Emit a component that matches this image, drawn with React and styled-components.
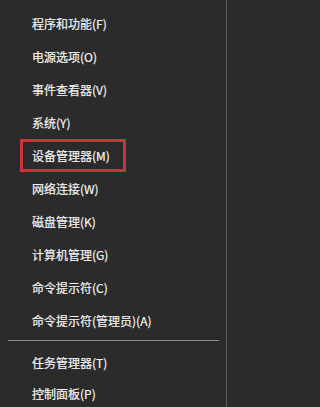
import React from "react";
import styled, { createGlobalStyle } from "styled-components";

const GlobalStyle = createGlobalStyle`
  html, body {
    margin: 0;
    padding: 0;
    background: #2b2b2b;
  }
`;

const topItems = [
  { label: "程序和功能(F)" },
  { label: "电源选项(O)" },
  { label: "事件查看器(V)" },
  { label: "系统(Y)" },
  { label: "设备管理器(M)", marked: true },
  { label: "网络连接(W)" },
  { label: "磁盘管理(K)" },
  { label: "计算机管理(G)" },
  { label: "命令提示符(C)" },
  { label: "命令提示符(管理员)(A)" },
];

const bottomItems = [{ label: "任务管理器(T)" }, { label: "控制面板(P)" }];

const App = () => {
  return (
    <>
      <GlobalStyle />
      <Menu>
        <Group>
          {topItems.map((item) => (
            <Item key={item.label}>
              <Label $marked={item.marked}>{item.label}</Label>
            </Item>
          ))}
        </Group>
        <Separator />
        <Group>
          {bottomItems.map((item) => (
            <Item key={item.label} $height={31}>
              <Label>{item.label}</Label>
            </Item>
          ))}
        </Group>
      </Menu>
    </>
  );
};

const Menu = styled.div`
  width: 227px;
  height: 407px;
  box-sizing: border-box;
  background: #2b2b2b;
  border-right: 1px solid #5c5c5c;
  padding-top: 7px;
  overflow: hidden;
  display: flex;
  flex-direction: column;
  font-family: "Noto Sans CJK SC", "Noto Sans", sans-serif;
  font-size: 12px;
  color: #f4f4f4;
  -webkit-text-stroke: 0.2px #f4f4f4;
`;

const Group = styled.div`
  flex-shrink: 0;
  display: flex;
  flex-direction: column;
`;

const Item = styled.div`
  flex-shrink: 0;
  height: ${(p) => p.$height || 33}px;
  display: flex;
  align-items: center;
`;

const Label = styled.span`
  box-sizing: border-box;
  display: flex;
  align-items: center;
  height: 33px;
  margin-left: ${(p) => (p.$marked ? "20px" : "32px")};
  width: ${(p) => (p.$marked ? "106px" : "auto")};
  padding-left: ${(p) => (p.$marked ? "9px" : "0")};
  border: ${(p) => (p.$marked ? "3px solid #c8363b" : "none")};
  white-space: nowrap;
`;

const Separator = styled.div`
  flex-shrink: 0;
  height: 1px;
  background: #8a8a8a;
  margin: 3px 7px 6px 8px;
`;

export default App;
